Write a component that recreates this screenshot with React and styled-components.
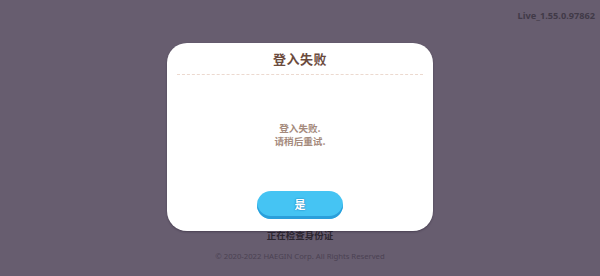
import React from 'react';
import styled, { createGlobalStyle } from 'styled-components';

const GlobalStyle = createGlobalStyle`
  html, body {
    margin: 0;
    padding: 0;
    background: #675d6f;
  }
  body {
    font-family: 'Noto Sans CJK SC', 'Noto Sans', sans-serif;
  }
`;

const Screen = styled.div`
  position: relative;
  width: 600px;
  height: 276px;
  overflow: hidden;
  background: #675d6f;
  display: flex;
  flex-direction: column;
  align-items: center;
`;

const TopBar = styled.div`
  align-self: stretch;
  display: flex;
  justify-content: flex-end;
  padding: 9px 5px 0 0;
  height: 20px;
`;

const Version = styled.span`
  font-family: 'Noto Sans', sans-serif;
  font-size: 9.2px;
  font-weight: 700;
  color: #413a48;
  line-height: 14px;
`;

const Status = styled.div`
  margin-top: 200px;
  font-size: 9.5px;
  font-weight: 700;
  color: #2c2630;
  line-height: 13px;
`;

const Footer = styled.div`
  margin-top: 9px;
  font-family: 'Noto Sans', sans-serif;
  font-size: 7.7px;
  color: #4b4253;
  line-height: 11px;
`;

const Overlay = styled.div`
  position: absolute;
  left: 167px;
  top: 43px;
  width: 266px;
  height: 188px;
  background: #ffffff;
  border-radius: 20px;
  box-shadow: 0 1px 2px rgba(40, 30, 50, 0.45);
  display: flex;
  flex-direction: column;
  align-items: center;
`;

const Title = styled.div`
  margin-top: 7px;
  font-size: 13px;
  font-weight: 700;
  color: #6b4b3d;
  line-height: 18px;
  letter-spacing: 0.5px;
`;

const Divider = styled.div`
  width: 246px;
  height: 0;
  margin-top: 6px;
  border-top: 1px dashed #ecd9cf;
`;

const Message = styled.div`
  margin-top: 47px;
  font-size: 9.6px;
  font-weight: 700;
  color: #a58a7c;
  line-height: 12.5px;
  text-align: center;
`;

const ConfirmButton = styled.button`
  margin-top: auto;
  margin-bottom: 12px;
  width: 86px;
  height: 28px;
  border: none;
  border-radius: 14px;
  background: #45c4f3;
  box-shadow: inset 0 -3px 0 #2a9fdb;
  color: #ffffff;
  font-family: 'Noto Sans CJK SC', sans-serif;
  font-size: 11px;
  font-weight: 700;
  padding: 0 0 3px;
  text-shadow: 0 0 2px #1c88c4, 0 0 1px #1c88c4;
  cursor: pointer;
`;

export default function App() {
  return (
    <>
      <GlobalStyle />
      <Screen>
        <TopBar>
          <Version>Live_1.55.0.97862</Version>
        </TopBar>
        <Status>正在检查身份证</Status>
        <Footer>© 2020-2022 HAEGIN Corp. All Rights Reserved</Footer>
        <Overlay>
          <Title>登入失败</Title>
          <Divider />
          <Message>
            登入失败.
            <br />
            请稍后重试.
          </Message>
          <ConfirmButton>是</ConfirmButton>
        </Overlay>
      </Screen>
    </>
  );
}
